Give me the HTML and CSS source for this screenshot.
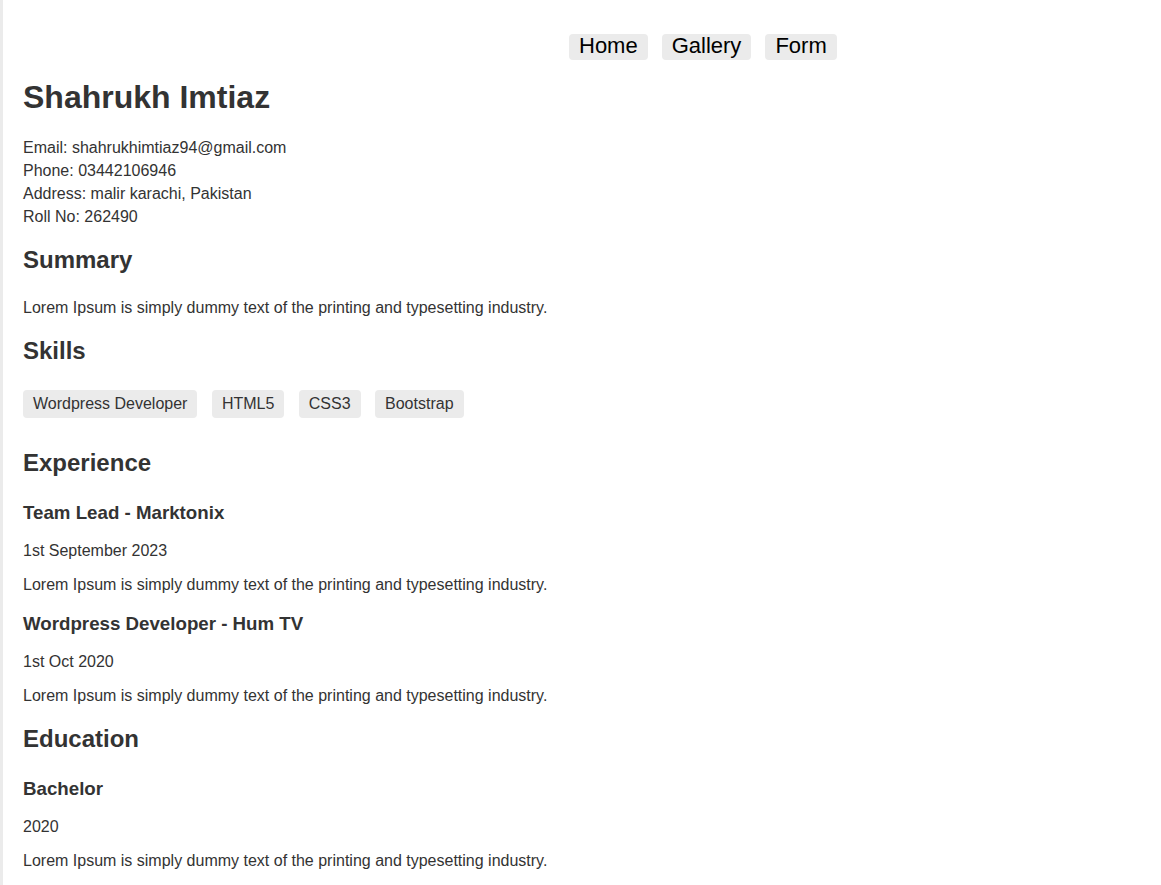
FILE: index.html
```html
<!DOCTYPE html>
<html lang="en">
<head>
<meta charset="utf-8">
<title>Shahrukh Imtiaz - Resume</title>
<link rel="stylesheet" href="styles.css">
</head>
<body>
  <nav class="nav">
    <a class="nav-link" href="#">Home</a>
    <a class="nav-link" href="#">Gallery</a>
    <a class="nav-link" href="#">Form</a>
  </nav>

  <header class="header">
    <h1 class="name">Shahrukh Imtiaz</h1>
    <div class="contact">
      <div>Email: shahrukhimtiaz94@gmail.com</div>
      <div>Phone: 03442106946</div>
      <div>Address: malir karachi, Pakistan</div>
      <div>Roll No: 262490</div>
    </div>
  </header>

  <section class="section">
    <h2 class="section-title">Summary</h2>
    <p class="text">Lorem Ipsum is simply dummy text of the printing and typesetting industry.</p>
  </section>

  <section class="section">
    <h2 class="section-title">Skills</h2>
    <div class="skills">
      <span class="skill">Wordpress Developer</span>
      <span class="skill">HTML5</span>
      <span class="skill">CSS3</span>
      <span class="skill">Bootstrap</span>
    </div>
  </section>

  <section class="section">
    <h2 class="section-title">Experience</h2>
    <h3 class="item-title">Team Lead - Marktonix</h3>
    <p class="text">1st September 2023</p>
    <p class="text">Lorem Ipsum is simply dummy text of the printing and typesetting industry.</p>
    <h3 class="item-title">Wordpress Developer - Hum TV</h3>
    <p class="text">1st Oct 2020</p>
    <p class="text">Lorem Ipsum is simply dummy text of the printing and typesetting industry.</p>
  </section>

  <section class="section">
    <h2 class="section-title">Education</h2>
    <h3 class="item-title">Bachelor</h3>
    <p class="text">2020</p>
    <p class="text">Lorem Ipsum is simply dummy text of the printing and typesetting industry.</p>
  </section>
</body>
</html>
```

FILE: styles.css
```css
html {
  background: #ffffff;
}

body {
  margin: 0;
  min-height: 100vh;
  box-sizing: border-box;
  border-left: 3px solid #ebebeb;
  padding: 34px 20px 0 20px;
  font-family: "Liberation Sans", Arial, sans-serif;
  font-size: 16px;
  line-height: 18px;
  color: #333333;
  background: #ffffff;
}

.nav {
  display: flex;
  gap: 14px;
  margin-left: 546px;
}

.nav-link {
  display: block;
  font-size: 22px;
  line-height: 24px;
  padding: 0 10px 2px 10px;
  background: #ebebeb;
  border-radius: 4px;
  color: #000000;
  text-decoration: none;
}

.header {
  margin-bottom: 18px;
}

.name {
  font-size: 32px;
  line-height: 37px;
  font-weight: bold;
  margin: 19px 0 20px 0;
}

.contact {
  line-height: 23px;
}

.section + .section {
  margin-top: 20px;
}

.section-title {
  font-size: 24px;
  line-height: 28px;
  font-weight: bold;
  margin: 0 0 25px 0;
}

.item-title {
  font-size: 18.72px;
  line-height: 22px;
  font-weight: bold;
  margin: 19px 0 18px 0;
}

.text {
  margin: 16px 0;
}

.skills {
  margin: 0;
}

.skill {
  display: inline-block;
  padding: 5px 10px;
  margin: 0 10px 11px 0;
  background: #ebebeb;
  border-radius: 4px;
}
```
